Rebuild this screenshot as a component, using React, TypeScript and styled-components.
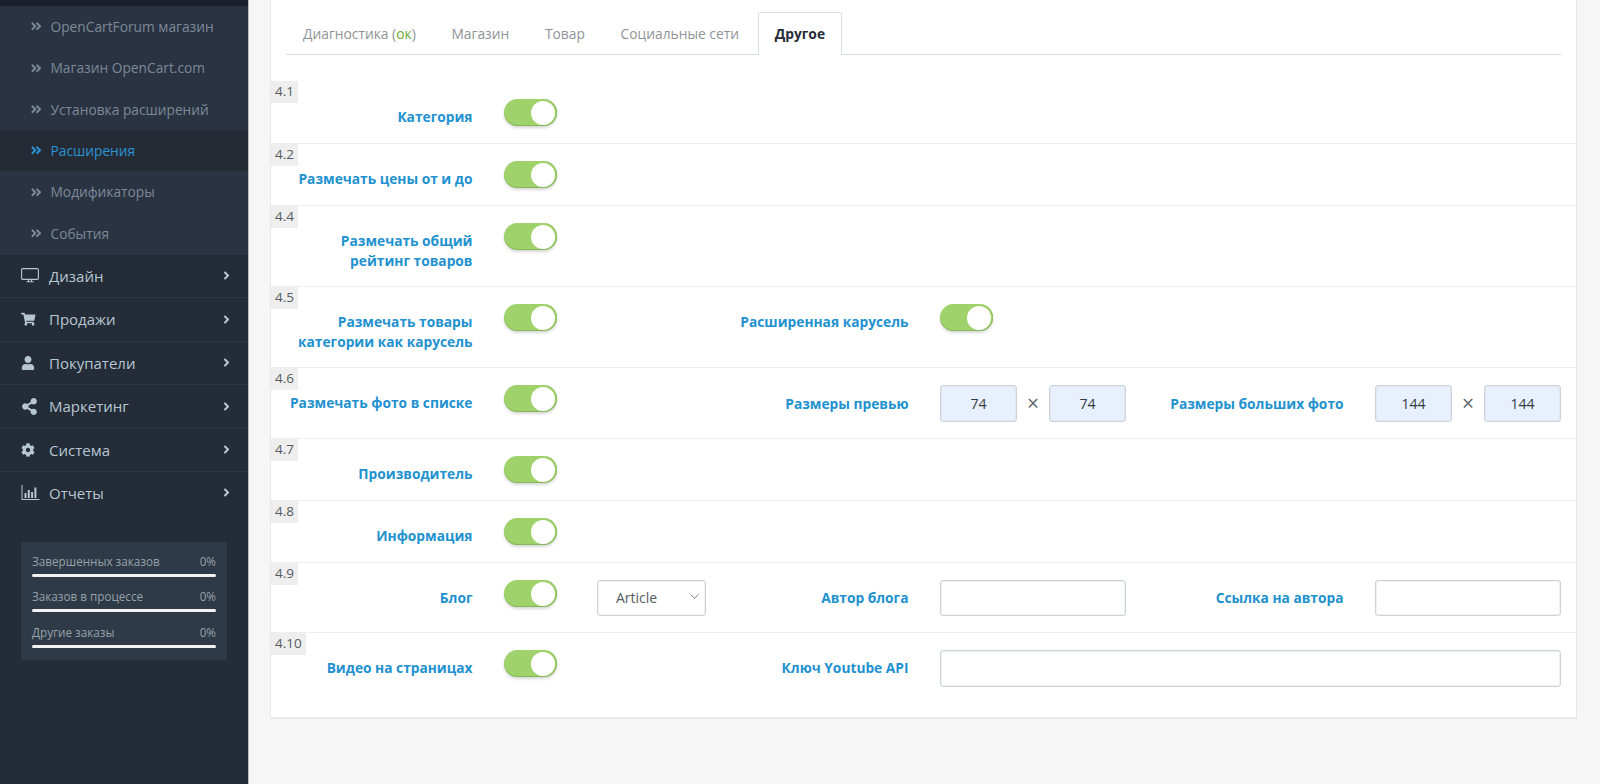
import React from "react";
import styled, { createGlobalStyle } from "styled-components";
import { FaAngleDoubleRight, FaAngleRight, FaCog, FaShareAlt, FaShoppingCart, FaUser } from "react-icons/fa";
import { ChevronDown } from "lucide-react";

const DesktopIcon = () => (
  <svg width="18" height="15" viewBox="0 0 18 15" fill="none">
    <rect x="0.6" y="0.6" width="16.8" height="10.8" rx="1.2" stroke="currentColor" strokeWidth="1.1" />
    <path d="M7.5 11.4v2M10.5 11.4v2M5.5 13.8h7" stroke="currentColor" strokeWidth="1.1" />
  </svg>
);

const ChartIcon = () => (
  <svg width="19" height="15" viewBox="0 0 19 15" fill="currentColor">
    <path d="M0.5 0v15h18v-1H1.5V0z" />
    <rect x="3.5" y="8" width="2" height="5" />
    <rect x="6.8" y="5" width="2" height="8" />
    <rect x="10.1" y="7" width="2" height="6" />
    <rect x="13.4" y="2.5" width="2" height="10.5" />
  </svg>
);

const subItems = [
  { title: "OpenCartForum магазин" },
  { title: "Магазин OpenCart.com" },
  { title: "Установка расширений" },
  { title: "Расширения", active: true },
  { title: "Модификаторы" },
  { title: "События" },
];

const menuItems = [
  { title: "Дизайн", icon: <DesktopIcon /> },
  { title: "Продажи", icon: <FaShoppingCart size={14.5} /> },
  { title: "Покупатели", icon: <FaUser size={14} /> },
  { title: "Маркетинг", icon: <FaShareAlt size={17} /> },
  { title: "Система", icon: <FaCog size={14} /> },
  { title: "Отчеты", icon: <ChartIcon /> },
];

const stats = ["Завершенных заказов", "Заказов в процессе", "Другие заказы"];
const tabs = ["Магазин", "Товар", "Социальные сети"];

const App = () => {
  return (
    <Page>
      <GlobalStyle />
      <Sidebar>
        <SidebarTop />
        <SubMenu>
          {subItems.map(({ title, active }) => (
            <SubItem key={title} $active={active}>
              <FaAngleDoubleRight size={12.5} />
              <span>{title}</span>
            </SubItem>
          ))}
        </SubMenu>
        <ul>
          {menuItems.map(({ title, icon }) => (
            <MenuItem key={title}>
              <MenuIcon>{icon}</MenuIcon>
              <span>{title}</span>
              <FaAngleRight size={13} />
            </MenuItem>
          ))}
        </ul>
        <StatsBox>
          {stats.map((title) => (
            <div key={title}>
              <StatHead>
                <span>{title}</span>
                <span>0%</span>
              </StatHead>
              <StatBar />
            </div>
          ))}
        </StatsBox>
      </Sidebar>
      <Content>
        <Panel>
          <Tabs>
            <Tab>
              Диагностика (<Ok>ок</Ok>)
            </Tab>
            {tabs.map((tab) => (
              <Tab key={tab}>{tab}</Tab>
            ))}
            <Tab $active>Другое</Tab>
          </Tabs>
          <Rows>
            <Row>
              <Badge>4.1</Badge>
              <Label>Категория</Label>
              <Toggle />
            </Row>
            <Row>
              <Badge>4.2</Badge>
              <Label>Размечать цены от и до</Label>
              <Toggle />
            </Row>
            <Row>
              <Badge>4.4</Badge>
              <Label>
                Размечать общий
                <br />
                рейтинг товаров
              </Label>
              <Toggle />
            </Row>
            <Row>
              <Badge>4.5</Badge>
              <Label>
                Размечать товары
                <br />
                категории как карусель
              </Label>
              <Toggle />
              <Label>Расширенная карусель</Label>
              <Toggle />
            </Row>
            <Row>
              <Badge>4.6</Badge>
              <Label>Размечать фото в списке</Label>
              <Toggle />
              <Label $offset>Размеры превью</Label>
              <SizeField>
                <SizeInput defaultValue="74" />
                <Times>×</Times>
                <SizeInput defaultValue="74" />
              </SizeField>
              <Label $offset>Размеры больших фото</Label>
              <SizeField>
                <SizeInput defaultValue="144" />
                <Times>×</Times>
                <SizeInput defaultValue="144" />
              </SizeField>
            </Row>
            <Row>
              <Badge>4.7</Badge>
              <Label>Производитель</Label>
              <Toggle />
            </Row>
            <Row>
              <Badge>4.8</Badge>
              <Label>Информация</Label>
              <Toggle />
            </Row>
            <Row>
              <Badge>4.9</Badge>
              <Label>Блог</Label>
              <ToggleWithSelect>
                <Toggle />
                <SelectBox>
                  <Select defaultValue="Article">
                    <option>Article</option>
                  </Select>
                  <ChevronDown size={15} strokeWidth={1.4} />
                </SelectBox>
              </ToggleWithSelect>
              <Label>Автор блога</Label>
              <TextInput />
              <Label>Ссылка на автора</Label>
              <TextInput />
            </Row>
            <Row>
              <Badge>4.10</Badge>
              <Label>Видео на страницах</Label>
              <Toggle />
              <Label>Ключ Youtube API</Label>
              <TextInput $wide />
            </Row>
          </Rows>
        </Panel>
      </Content>
    </Page>
  );
};

export default App;

const GlobalStyle = createGlobalStyle`
  * {
    box-sizing: border-box;
  }
  html, body {
    margin: 0;
    height: 100%;
  }
  body {
    font-family: "Open Sans", "Noto Sans", sans-serif;
    font-size: 14px;
    background: #f6f6f6;
  }
  ul {
    list-style: none;
    margin: 0;
    padding: 0;
  }
`;

const Page = styled.div`
  display: flex;
  height: 784px;
  overflow: hidden;
`;

const Sidebar = styled.aside`
  width: 249px;
  flex-shrink: 0;
  background: #242c37;
  border-right: 1px solid #b9bdc2;
`;

const SidebarTop = styled.div`
  height: 6px;
  background: #1a2029;
`;

const SubMenu = styled.ul`
  background: #2a3342;
`;

const SubItem = styled.li<{ $active?: boolean }>`
  display: flex;
  align-items: center;
  height: 41.3px;
  padding-left: 30px;
  gap: 8px;
  color: ${({ $active }) => ($active ? "#2a93d3" : "#7d8998")};
  background: ${({ $active }) => ($active ? "#242b35" : "transparent")};
  font-size: 13.75px;
`;

const MenuItem = styled.li`
  display: flex;
  align-items: center;
  height: 43.4px;
  padding: 0 15px 0 21px;
  border-top: 1px solid #2b3544;
  color: #b7c6d3;
  font-size: 15px;

  span {
    flex: 1;
  }
`;

const MenuIcon = styled.i`
  width: 28px;
  display: flex;
  align-items: center;
`;

const StatsBox = styled.div`
  margin: 28px 21px 0;
  height: 118px;
  padding: 9.5px 11px 0;
  background: #2e3a47;
  border-radius: 2px;
  display: flex;
  flex-direction: column;
  gap: 10.5px;
`;

const StatHead = styled.div`
  display: flex;
  justify-content: space-between;
  color: #98a1aa;
  font-size: 11.7px;
  line-height: 18px;
`;

const StatBar = styled.div`
  height: 3px;
  margin-top: 4px;
  border-radius: 2px;
  background: #f2f2f2;
`;

const Content = styled.main`
  flex: 1;
  padding: 0 23px 0 21px;
`;

const Panel = styled.section`
  background: #fff;
  border: 1px solid #e6e8ea;
  border-top: 0;
  border-bottom-width: 2px;
  padding: 12px 0 14px;
`;

const Tabs = styled.ul`
  display: flex;
  gap: 1.7px;
  height: 43px;
  margin: 0 15px 0 15px;
  border-bottom: 1px solid #dcdfe2;
`;

const Tab = styled.li<{ $active?: boolean }>`
  height: 43px;
  padding: 0 16px;
  font-size: 13.8px;
  line-height: 41px;
  color: ${({ $active }) => ($active ? "#252c37" : "#8f9397")};
  font-weight: ${({ $active }) => ($active ? 700 : 400)};
  background: ${({ $active }) => ($active ? "#fff" : "transparent")};
  border: 1px solid ${({ $active }) => ($active ? "#dcdfe2" : "transparent")};
  border-bottom: 0;
  border-radius: 2px 2px 0 0;
`;

const Ok = styled.span`
  color: #6aa92f;
`;

const Rows = styled.div`
  margin-top: 25px;
`;

const Row = styled.div`
  position: relative;
  display: grid;
  grid-template-columns: 202px 202px 172px 186px 187px 186px;
  column-gap: 31px;
  align-items: start;
  padding: 17px 0;
  border-top: 1px solid #eee;

  &:first-child {
    padding-top: 18px;
    border-top-color: transparent;
  }
`;

const Badge = styled.span`
  position: absolute;
  top: 0;
  left: 0;
  height: 22px;
  padding: 0 4px;
  background: #eee;
  color: #555b61;
  font-size: 13.5px;
  line-height: 21px;
`;

const Label = styled.label<{ $offset?: boolean }>`
  padding: ${({ $offset }) => ($offset ? "9px" : "8px")} 0.5px 0 0;
  margin-bottom: -2px;
  color: #2191d0;
  font-size: 13.75px;
  font-weight: 700;
  line-height: 20px;
  text-align: right;
`;

const ToggleTrack = styled.span`
  position: relative;
  display: block;
  width: 53px;
  height: 27px;
  border-radius: 14px;
  background: #9fd26a;
  box-shadow: inset 0 -1px 0 #86b859, inset -1px 0 0 #8fc25f, 0 2px 3px rgba(0, 0, 0, 0.16);
`;

const ToggleKnob = styled.span`
  position: absolute;
  top: 2px;
  right: 2px;
  width: 24px;
  height: 24px;
  border-radius: 50%;
  background: #fff;
`;

const Toggle = () => (
  <ToggleTrack>
    <ToggleKnob />
  </ToggleTrack>
);

const ToggleWithSelect = styled.div`
  display: flex;
  gap: 40px;
`;

const SelectBox = styled.div`
  position: relative;
  width: 109px;
  color: #666c72;

  svg {
    position: absolute;
    top: 9px;
    right: 4px;
    pointer-events: none;
  }
`;

const Select = styled.select`
  display: block;
  width: 100%;
  height: 36.5px;
  margin-bottom: -1px;
  padding: 0 18px;
  appearance: none;
  background: #fff;
  border: 1px solid #cdd3d9;
  border-radius: 3px;
  box-shadow: inset 0 0 0 0.5px #dfe3e7;
  color: #555b61;
  font: 14px "Open Sans", sans-serif;
`;

const SizeField = styled.div`
  display: flex;
  align-items: center;
  justify-content: space-between;
  margin-bottom: -1px;
`;

const SizeInput = styled.input`
  display: block;
  width: 77px;
  height: 36.5px;
  background: #e8f0fe;
  border: 1px solid #cdd3d9;
  border-radius: 3px;
  box-shadow: inset 0 0 0 0.5px #d8dee6;
  color: #333a42;
  font: 14px "Open Sans", sans-serif;
  text-align: center;
`;

const Times = styled.span`
  color: #60666c;
  font-size: 21px;
  line-height: 20px;
`;

const TextInput = styled.input<{ $wide?: boolean }>`
  display: block;
  width: 100%;
  height: 36.5px;
  margin-bottom: -1px;
  grid-column: ${({ $wide }) => ($wide ? "span 3" : "auto")};
  background: #fff;
  border: 1px solid #cdd3d9;
  border-radius: 3px;
  box-shadow: inset 0 0 0 0.5px #dfe3e7;
`;
